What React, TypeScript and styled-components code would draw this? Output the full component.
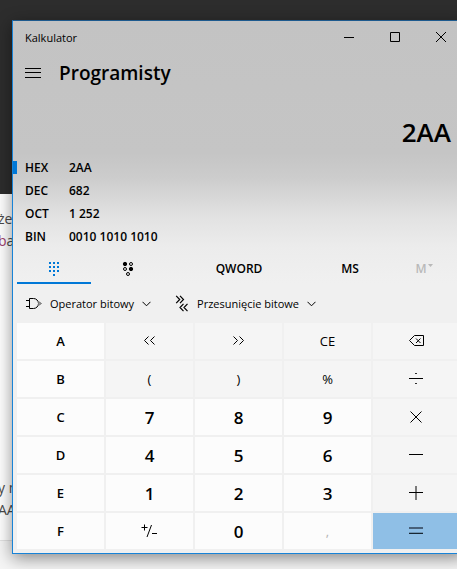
import React from "react";
import styled, { createGlobalStyle } from "styled-components";

const GlobalStyle = createGlobalStyle`
  * { box-sizing: border-box; }
  body {
    margin: 0;
    font-family: "Open Sans", "Noto Sans", sans-serif;
    color: #000;
    background: #fff;
  }
  button { font: inherit; color: inherit; border: 0; padding: 0; background: transparent; }
  svg { display: block; fill: none; stroke: currentColor; }
`;

const Desktop = styled.div`
  display: grid;
  grid-template-columns: minmax(0, 1fr);
  min-height: 100vh;
  overflow: hidden;
`;

const Page = styled.div`
  grid-area: 1 / 1;
  display: flex;
  flex-direction: column;
  font-size: 14px;
  line-height: 22px;
  color: #4a4a4a;
`;

const Banner = styled.div`
  height: 194px;
  background: #2d2d2d;
`;

const Article = styled.div`
  display: flex;
  flex-direction: column;
  justify-content: space-between;
  height: 347px;
  padding: 14px 0 19px;
  background: #fff;
  border-bottom: 1px solid #e2e2e2;
`;

const Paragraph = styled.p`
  margin: 0 0 0 -2px;
`;

const Mark = styled.span`
  color: #a03c6e;
`;

const Footer = styled.div`
  flex: 1;
  background: #f5f5f5;
`;

const Window = styled.main`
  grid-area: 1 / 1;
  align-self: start;
  margin: 20px -8px 0 12px;
  border: 1px solid #1883d7;
  border-top-color: #1d5a8e;
  background: linear-gradient(#c3c3c3 0, #c5c5c5 132px, #cccccc 156px, #e2e2e2 196px, #ececec 226px, #f0f0f0 262px, #f0f0f0 100%);
  box-shadow: 0 4px 16px rgba(0, 0, 0, 0.45);
`;

const TitleBar = styled.header`
  display: flex;
  align-items: center;
  height: 32px;
  padding-left: 12px;
  font-size: 11px;
`;

const Title = styled.span`
  flex: 1;
`;

const CaptionButton = styled.button`
  display: grid;
  place-items: center;
  width: 46px;
  height: 32px;
`;

const Heading = styled.div`
  display: flex;
  align-items: center;
  gap: 18px;
  height: 40px;
  padding-left: 12px;
`;

const ModeName = styled.h1`
  margin: 0;
  font-size: 19px;
  line-height: 24px;
  font-weight: 600;
`;

const Result = styled.output`
  display: flex;
  align-items: center;
  justify-content: flex-end;
  height: 63px;
  padding: 14px 13px 0 0;
  font-size: 26px;
  font-weight: 600;
`;

const BaseButton = styled.button<{ $active?: boolean }>`
  display: grid;
  grid-template-columns: 4px 52px 1fr;
  align-items: center;
  width: 100%;
  height: 23px;
  font-size: 12px;
  font-weight: 600;
  text-align: left;

  &::before {
    content: "";
    height: 13px;
    background: ${(p) => (p.$active ? "#0078d7" : "transparent")};
  }
`;

const BaseName = styled.span`
  padding-left: 8px;
`;

const Bases = styled.section`
  padding-bottom: 2px;
`;

const Tabs = styled.nav`
  display: grid;
  grid-template-columns: 1fr 1fr 2fr 1fr 1fr;
  height: 33px;
  margin-top: 1px;
  padding: 0 3px 0 4px;
`;

const Tab = styled.button<{ $active?: boolean; $faded?: boolean }>`
  display: flex;
  align-items: center;
  justify-content: center;
  padding-top: 5px;
  font-size: 12px;
  line-height: 16px;
  font-weight: 600;
  color: ${(p) => (p.$active ? "#0078d7" : p.$faded ? "#b9b9b9" : "#000")};
  border-bottom: 2px solid ${(p) => (p.$active ? "#0078d7" : "transparent")};
`;

const Tools = styled.div`
  display: flex;
  align-items: center;
  gap: 24px;
  height: 39px;
  padding-left: 13px;
  font-size: 11px;
`;

const Tool = styled.button`
  display: flex;
  align-items: center;
  gap: 8px;
`;

const Keypad = styled.div`
  display: grid;
  grid-template-columns: repeat(5, minmax(0, 1fr));
  grid-auto-rows: 36px;
  gap: 2px;
  padding: 0 4px 4px;
`;

type Kind = "letter" | "digit" | "op" | "equals" | "off";

const keyColor: Record<Kind, string> = {
  letter: "#fcfcfc",
  digit: "#fcfcfc",
  off: "#fcfcfc",
  op: "#f5f5f5",
  equals: "#8fbfe6",
};

const KeyButton = styled.button<{ $kind: Kind }>`
  display: grid;
  place-items: center;
  background: ${(p) => keyColor[p.$kind]};
  color: ${(p) => (p.$kind === "off" ? "#b4b4b4" : "#000")};
  font-size: ${(p) => (p.$kind === "digit" ? 17 : 13)}px;
  font-weight: ${(p) => (p.$kind === "digit" || p.$kind === "letter" ? 600 : 400)};
`;

const Chevron = () => (
  <svg width="9" height="6" viewBox="0 0 9 6" stroke="#666">
    <path d="M.5 .8l4 4 4-4" />
  </svg>
);

const GateIcon = () => (
  <svg width="16" height="13" viewBox="0 0 16 13">
    <path d="M3.5 1.5H7.500a5 5 0 0 1 0 10H3.5zM0 3.500h3.500M0 9.500h3.500" />
    <path d="M12.500 4.500l3 2-3 2z" fill="#999" stroke="#777" />
  </svg>
);

const ShiftIcon = () => (
  <svg width="14" height="17" viewBox="0 0 14 17" strokeWidth="1.200">
    <path d="M1.200 .8l3.500 3.700L1.200 8.200M5 .8l3.500 3.700L5 8.200M8.500 8.800L5 12.500l3.500 3.700M12.500 8.800L9 12.500l3.500 3.700" />
  </svg>
);

const KeypadIcon = () => (
  <svg width="10" height="14" viewBox="0 0 10 14">
    <g fill="currentColor" stroke="none">
      {[0, 4, 8].map((y) => [0, 4, 8].map((x) => <rect key={`${x}-${y}`} x={x} y={y} width="2" height="2" />))}
      <rect x="4" y="12" width="2" height="2" />
    </g>
  </svg>
);

const BitsIcon = () => (
  <svg width="12" height="16" viewBox="-1 -1 12 16">
    <circle cx="2" cy="2" r="1.700" fill="currentColor" />
    <circle cx="8" cy="2" r="1.500" />
    <circle cx="2" cy="7" r="1.500" />
    <circle cx="8" cy="7" r="1.700" fill="currentColor" />
    <circle cx="5" cy="12" r="1.500" />
  </svg>
);

const MemoryMark = () => (
  <svg width="6" height="10" viewBox="0 0 6 10">
    <path d="M1 0h5L3.500 3z" fill="currentColor" stroke="none" />
  </svg>
);

const DoubleAngle = ({ right }: { right?: boolean }) => (
  <svg width="13" height="10" viewBox="0 0 13 10">
    <path d={right ? "M1.500 .5l4 4-4 4M7.500 .5l4 4-4 4" : "M5.500 .5l-4 4 4 4M11.500 .5l-4 4 4 4"} />
  </svg>
);

const Backspace = () => (
  <svg width="15" height="12" viewBox="0 0 15 12">
    <path d="M5.500 .5h9v10h-9l-5-5zM7 3.500l4.500 4.500M11.500 3.500L7 8" />
  </svg>
);

const Divide = () => (
  <svg width="15" height="12" viewBox="0 0 15 12">
    <path d="M0 5.500h14M6.200 .5h1.600M6.200 10.500h1.600" />
  </svg>
);

const Multiply = () => (
  <svg width="13" height="12" viewBox="0 0 13 12">
    <path d="M.5 .5l11 11M11.500 .5l-11 11" />
  </svg>
);

const Minus = () => (
  <svg width="15" height="2" viewBox="0 0 15 2">
    <path d="M0 .5h14" />
  </svg>
);

const Plus = () => (
  <svg width="15" height="14" viewBox="0 0 15 14">
    <path d="M0 6.500h14" />
    <path d="M7 0v14" />
  </svg>
);

const Equals = () => (
  <svg width="15" height="8" viewBox="0 0 15 8">
    <path d="M0 1h14" strokeWidth="2" stroke="#47607a" />
    <path d="M0 5.500h14" stroke="#6f95b5" />
    <path d="M0 6.500h14" stroke="#182733" />
  </svg>
);

const SignToggle = () => (
  <svg width="17" height="14" viewBox="0 0 17 14">
    <path d="M.5 3.500h6M3.500 .5v6M10.500 1L6 13M11 9.500h5" />
  </svg>
);

const keys: { id: string; kind: Kind; face?: React.ReactNode }[] = [
  { id: "A", kind: "letter" },
  { id: "<<", kind: "op", face: <DoubleAngle /> },
  { id: ">>", kind: "op", face: <DoubleAngle right /> },
  { id: "CE", kind: "op" },
  { id: "Backspace", kind: "op", face: <Backspace /> },
  { id: "B", kind: "letter" },
  { id: "(", kind: "op" },
  { id: ")", kind: "op" },
  { id: "%", kind: "op" },
  { id: "÷", kind: "op", face: <Divide /> },
  { id: "C", kind: "letter" },
  { id: "7", kind: "digit" },
  { id: "8", kind: "digit" },
  { id: "9", kind: "digit" },
  { id: "×", kind: "op", face: <Multiply /> },
  { id: "D", kind: "letter" },
  { id: "4", kind: "digit" },
  { id: "5", kind: "digit" },
  { id: "6", kind: "digit" },
  { id: "−", kind: "op", face: <Minus /> },
  { id: "E", kind: "letter" },
  { id: "1", kind: "digit" },
  { id: "2", kind: "digit" },
  { id: "3", kind: "digit" },
  { id: "+", kind: "op", face: <Plus /> },
  { id: "F", kind: "letter" },
  { id: "+/−", kind: "digit", face: <SignToggle /> },
  { id: "0", kind: "digit" },
  { id: ",", kind: "off" },
  { id: "=", kind: "equals", face: <Equals /> },
];

const bases = [
  ["HEX", "2AA"],
  ["DEC", "682"],
  ["OCT", "1 252"],
  ["BIN", "0010 1010 1010"],
];

export default function App() {
  return (
    <>
      <GlobalStyle />
      <Desktop>
        <Page>
          <Banner />
          <Article>
            <Paragraph>że<br /><Mark>b</Mark>a</Paragraph>
            <Paragraph>y m<br />AA</Paragraph>
          </Article>
          <Footer />
        </Page>
        <Window>
          <TitleBar>
            <Title>Kalkulator</Title>
            <CaptionButton aria-label="Minimalizuj">
              <svg width="10" height="10" viewBox="0 0 10 10"><path d="M0 5.500h10" /></svg>
            </CaptionButton>
            <CaptionButton aria-label="Maksymalizuj">
              <svg width="10" height="10" viewBox="0 0 10 10"><path d="M.5 .5h9v9h-9z" /></svg>
            </CaptionButton>
            <CaptionButton aria-label="Zamknij">
              <svg width="10" height="10" viewBox="0 0 10 10"><path d="M0 0l10 10M10 0L0 10" /></svg>
            </CaptionButton>
          </TitleBar>
          <Heading>
            <button aria-label="Menu">
              <svg width="16" height="10" viewBox="0 0 16 10"><path d="M0 .5h16M0 4.500h16M0 9.500h16" /></svg>
            </button>
            <ModeName>Programisty</ModeName>
          </Heading>
          <Result>2AA</Result>
          <Bases>
            {bases.map(([name, value], i) => (
              <BaseButton key={name} $active={i === 0}>
                <BaseName>{name}</BaseName>
                <span>{value}</span>
              </BaseButton>
            ))}
          </Bases>
          <Tabs>
            <Tab $active aria-label="Klawiatura pełna"><KeypadIcon /></Tab>
            <Tab aria-label="Klawiatura bitowa"><BitsIcon /></Tab>
            <Tab>QWORD</Tab>
            <Tab>MS</Tab>
            <Tab $faded disabled>M<MemoryMark /></Tab>
          </Tabs>
          <Tools>
            <Tool><GateIcon />Operator bitowy<Chevron /></Tool>
            <Tool><ShiftIcon />Przesunięcie bitowe<Chevron /></Tool>
          </Tools>
          <Keypad>
            {keys.map(({ id, kind, face }) => (
              <KeyButton key={id} $kind={kind} disabled={kind === "off"} aria-label={face ? id : undefined}>
                {face ?? id}
              </KeyButton>
            ))}
          </Keypad>
        </Window>
      </Desktop>
    </>
  );
}
